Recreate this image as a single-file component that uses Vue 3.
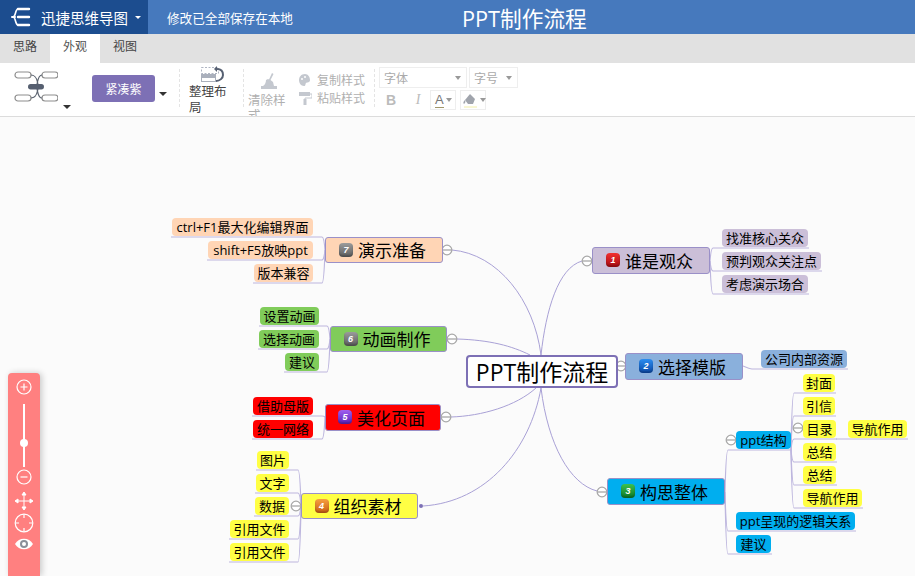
<template>
  <div class="app">
    <header class="topbar">
      <div class="brand">
        <svg class="logo" width="20" height="22" viewBox="0 0 20 22" fill="none" stroke="#fff" stroke-width="2" stroke-linecap="round">
          <path d="M7 3h11M7 11h11M7 19h11" stroke-width="2.4" />
          <path d="M7 3C4 3 5 11 2 11 5 11 4 19 7 19" stroke-width="1.6" />
          <path d="M1 11h3" />
        </svg>
        <span class="brand-name">迅捷思维导图</span>
        <i class="caret caret-white"></i>
      </div>
      <span class="save-msg">修改已全部保存在本地</span>
      <span class="doc-title">PPT制作流程</span>
    </header>

    <nav class="tabs">
      <span class="tab">思路</span>
      <span class="tab active">外观</span>
      <span class="tab">视图</span>
    </nav>

    <section class="toolbar">
      <div class="tool-theme">
        <svg width="44" height="32" viewBox="0 0 44 32" fill="none" stroke="#8d8d8d" stroke-width="1.2">
          <rect x="1" y="2" width="16" height="6" rx="3" />
          <rect x="28" y="2" width="16" height="6" rx="3" />
          <rect x="1" y="25" width="16" height="6" rx="3" />
          <rect x="28" y="25" width="16" height="6" rx="3" />
          <path d="M17 5c6 0 6 6 7 9M28 5c-4 0-4 6-5 9M17 28c6 0 6-6 7-9M28 28c-4 0-4-6-5-9" stroke="#5c6470" />
          <rect x="14" y="14" width="16" height="5.5" rx="2.7" fill="#565f70" stroke="none" />
        </svg>
        <i class="caret caret-struct"></i>
        <button class="skin-btn">紧凑紫</button>
        <i class="caret caret-skin"></i>
      </div>
      <span class="divider"></span>
      <div class="tool-tidy">
        <svg width="26" height="18" viewBox="0 0 26 18" fill="none">
          <rect x="1.5" y="1.5" width="17" height="6" stroke="#9aa2b2" stroke-width="0.8" stroke-dasharray="2 1.5" />
          <rect x="1" y="8" width="15" height="8" fill="#aab0bc" />
          <rect x="2" y="12" width="13" height="3" fill="#fff" />
          <path d="M17 3c5 0 6 3 6 6s-3 6-7 6" stroke="#566072" stroke-width="2" />
          <path d="M17 0l-3 3 3 3z" fill="#566072" />
        </svg>
        <span>整理布局</span>
      </div>
      <span class="divider"></span>
      <div class="tool-clear">
        <svg width="18" height="18" viewBox="0 0 18 18">
          <path d="M12 1l1.5 1-3 6 2.5 2 1 4H3c2-1 3-4 3-6l2-1 1 .5z" fill="#c4c8cf" />
          <rect x="1" y="14" width="16" height="3" fill="#c4c8cf" />
        </svg>
        <span>清除样式</span>
      </div>
      <div class="tool-format">
        <div class="format-row">
          <svg width="14" height="14" viewBox="0 0 14 14">
            <path d="M7 1C3 1 1 4 1 7s2 6 5 6c2 0 1-2 2-3s4 0 4-3-2-6-5-6z" fill="#c4c8cf" />
            <circle cx="4" cy="6" r="1" fill="#fff" />
            <circle cx="7" cy="4" r="1" fill="#fff" />
          </svg>
          <span>复制样式</span>
        </div>
        <div class="format-row">
          <svg width="14" height="14" viewBox="0 0 14 14">
            <rect x="1" y="1" width="11" height="4" fill="#c4c8cf" />
            <path d="M12 3h2v4H7v2" fill="none" stroke="#c4c8cf" />
            <rect x="5.5" y="8" width="3" height="6" fill="#c4c8cf" />
          </svg>
          <span>粘贴样式</span>
        </div>
      </div>
      <span class="divider"></span>
      <div class="tool-font">
        <div class="font-row">
          <span class="select select-font">字体<i class="caret caret-gray"></i></span>
          <span class="select select-size">字号<i class="caret caret-gray"></i></span>
        </div>
        <div class="font-row second">
          <b class="glyph-b">B</b>
          <em class="glyph-i">I</em>
          <span class="color-box"><span class="letter-a">A</span><i class="caret caret-gray"></i></span>
          <span class="color-box fill-box">
            <svg width="15" height="15" viewBox="0 0 15 15">
              <path d="M7 1l5 5-2 5H5L2 7z" fill="#a0a4ac" />
              <path d="M2 7c-2 2-2 3-1 4 1-1 2-2 1-4z" fill="#a0a4ac" />
              <path d="M1 14h13" stroke="#f2eea8" />
            </svg>
            <i class="caret caret-gray"></i>
          </span>
        </div>
      </div>
    </section>

    <main class="canvas">
      <svg class="links" width="915" height="459" viewBox="0 117 915 459" fill="none">
        <path v-for="(d, i) in curves" :key="'c' + i" :d="d" stroke="#a9a1d6" />
        <path v-for="(d, i) in branchPaths" :key="'b' + i" :d="d" stroke="#bdb6de" stroke-width="1.2" />
        <g v-for="(f, i) in folds" :key="'f' + i" stroke="#a8a8a8" stroke-width="1.3">
          <circle :cx="f[0]" :cy="f[1]" r="4.8" fill="#fff" />
          <path :d="`M${f[0] - 4} ${f[1]}h8`" />
        </g>
        <circle cx="421" cy="506" r="2" fill="#7d70b5" />
      </svg>

      <div class="node root" :style="boxStyle(root)">PPT制作流程</div>

      <div
        v-for="t in topics"
        :key="t.label"
        class="node topic"
        :style="[boxStyle(t), { background: t.color }]"
      >
        <span class="badge" :style="{ background: t.badge }">{{ t.num }}</span>
        <span>{{ t.label }}</span>
      </div>

      <template v-for="(b, bi) in branches" :key="bi">
        <div
          v-for="p in b.items"
          :key="p.label + p.y"
          class="node pill"
          :style="[boxStyle({ ...p, h: 18 }), { background: b.color }]"
        >{{ p.label }}</div>
      </template>

      <aside class="zoom-panel">
        <svg width="16" height="16" viewBox="0 0 16 16" fill="none" stroke="#fff" stroke-width="1.2">
          <circle cx="8" cy="8" r="7" />
          <path d="M4.5 8h7M8 4.5v7" />
        </svg>
        <div class="slider"><span class="knob"></span></div>
        <svg width="16" height="16" viewBox="0 0 16 16" fill="none" stroke="#fff" stroke-width="1.2">
          <circle cx="8" cy="8" r="7" />
          <path d="M4.5 8h7" />
        </svg>
        <svg class="gap-move" width="18" height="18" viewBox="0 0 18 18" fill="none" stroke="#fff" stroke-width="1">
          <path d="M9 1v16M1 9h16" />
          <path d="M9 0l-2 3h4zM9 18l-2-3h4zM0 9l3-2v4zM18 9l-3-2v4z" fill="#fff" />
        </svg>
        <svg width="20" height="20" viewBox="0 0 20 20" fill="none" stroke="#fff" stroke-width="1.2">
          <circle cx="10" cy="10" r="8.8" />
          <path d="M10 1.5v3.5M10 15v3.5M1.5 10h3.5M15 10h3.5" />
        </svg>
        <svg width="20" height="14" viewBox="0 0 20 14">
          <path d="M1 7c4-7 14-7 18 0-4 7-14 7-18 0z" fill="#fff" />
          <circle cx="10" cy="7" r="4" fill="#8a8f99" />
          <circle cx="10" cy="7" r="2" fill="#fff" />
        </svg>
      </aside>
    </main>
  </div>
</template>

<script setup>
// page coordinates, the canvas starts at y = 117
const CANVAS_TOP = 117

const root = { x: 466, y: 355, w: 152, h: 33 }

const topics = [
  { label: '谁是观众', num: 1, x: 592, y: 247, w: 118, h: 27, color: '#cbbfd8', badge: 'linear-gradient(#f23030, #a80c14)' },
  { label: '选择模版', num: 2, x: 625, y: 353, w: 118, h: 27, color: '#8ab0dc', badge: 'linear-gradient(#2b8df0, #0b4aa8)' },
  { label: '构思整体', num: 3, x: 607, y: 478, w: 118, h: 27, color: '#00aeef', badge: 'linear-gradient(#3cc04c, #0b7a2a)' },
  { label: '组织素材', num: 4, x: 301, y: 493, w: 117, h: 26, color: '#ffff44', badge: 'linear-gradient(#f6a040, #cc6014)' },
  { label: '美化页面', num: 5, x: 325, y: 404, w: 116, h: 27, color: '#ff0000', badge: 'linear-gradient(#a060f0, #5a20b8)' },
  { label: '动画制作', num: 6, x: 330, y: 326, w: 117, h: 26, color: '#80cc5a', badge: 'linear-gradient(#9a9a9a, #5c5c5c)' },
  { label: '演示准备', num: 7, x: 325, y: 237, w: 118, h: 26, color: '#ffd5b5', badge: 'linear-gradient(#9c9c9c, #5e5e5e)' }
]

const branches = [
  {
    hub: [325, 250], spine: 322, side: 'left', color: '#ffd5b5',
    items: [
      { label: 'ctrl+F1最大化编辑界面', x: 172, y: 218, w: 141 },
      { label: 'shift+F5放映ppt', x: 208, y: 241, w: 105 },
      { label: '版本兼容', x: 254, y: 264, w: 59 }
    ]
  },
  {
    hub: [330, 339], spine: 327, side: 'left', color: '#80cc5a',
    items: [
      { label: '设置动画', x: 260, y: 307, w: 59 },
      { label: '选择动画', x: 259, y: 330, w: 60 },
      { label: '建议', x: 285, y: 353, w: 34 }
    ]
  },
  {
    hub: [325, 417], spine: 322, side: 'left', color: '#ff0000',
    items: [
      { label: '借助母版', x: 253, y: 397, w: 60 },
      { label: '统一网络', x: 253, y: 420, w: 60 }
    ]
  },
  {
    hub: [301, 506], spine: 298, side: 'left', color: '#ffff44',
    items: [
      { label: '图片', x: 257, y: 451, w: 32 },
      { label: '文字', x: 256, y: 474, w: 33 },
      { label: '数据', x: 255, y: 497, w: 34 },
      { label: '引用文件', x: 230, y: 520, w: 59 },
      { label: '引用文件', x: 230, y: 543, w: 59 }
    ]
  },
  {
    hub: [710, 261], spine: 713, side: 'right', color: '#cbbfd8',
    items: [
      { label: '找准核心关众', x: 722, y: 229, w: 86 },
      { label: '预判观众关注点', x: 722, y: 252, w: 99 },
      { label: '考虑演示场合', x: 722, y: 275, w: 86 }
    ]
  },
  {
    hub: [743, 366], spine: 752, side: 'right', color: '#8ab0dc',
    items: [{ label: '公司内部资源', x: 761, y: 350, w: 86 }]
  },
  {
    hub: [725, 492], spine: 728, side: 'right', color: '#00aeef',
    items: [
      { label: 'ppt结构', x: 736, y: 431, w: 55 },
      { label: 'ppt呈现的逻辑关系', x: 736, y: 512, w: 119 },
      { label: '建议', x: 736, y: 535, w: 35 }
    ]
  },
  {
    hub: [791, 450], spine: 794, side: 'right', color: '#ffff44',
    items: [
      { label: '封面', x: 803, y: 374, w: 32 },
      { label: '引信', x: 803, y: 397, w: 32 },
      { label: '目录', x: 803, y: 420, w: 33 },
      { label: '总结', x: 803, y: 443, w: 33 },
      { label: '总结', x: 803, y: 466, w: 33 },
      { label: '导航作用', x: 803, y: 489, w: 59 }
    ]
  },
  {
    hub: [836, 439], spine: 838, side: 'right', color: '#ffff44',
    items: [{ label: '导航作用', x: 848, y: 420, w: 59 }]
  }
]

const curves = [
  'M452 250C498 254 534 300 541 355',
  'M582 261C558 268 546 310 541 355',
  'M457 339C490 340 512 346 530 355',
  'M451 417C482 416 516 406 536 388',
  'M423 506C486 502 530 450 541 388',
  'M597 491C570 484 548 445 541 388',
  'M618 366H625'
]

const folds = [
  [447, 250], [452, 339], [446, 417], [296, 506],
  [587, 261], [621, 366], [602, 492], [731, 440], [798, 428]
]

// every leaf sits on an underline that bends back to its parent
const branchPaths = branches.flatMap(({ hub, spine, side, items }) =>
  items.map(p => {
    const uy = p.y + 19
    if (side === 'left') {
      return `M${p.x - 1} ${uy}H${spine}Q${spine + 2} ${uy} ${hub[0]} ${hub[1]}`
    }
    return `M${p.x + p.w + 1} ${uy}H${spine}Q${spine - 2} ${uy} ${hub[0]} ${hub[1]}`
  })
)

const boxStyle = n => ({
  left: n.x + 'px',
  top: n.y - CANVAS_TOP + 'px',
  width: n.w + 'px',
  height: n.h + 'px'
})
</script>

<style>
html,
body {
  margin: 0;
  overflow: hidden;
}
</style>

<style scoped>
.app {
  display: flex;
  flex-direction: column;
  height: 576px;
  overflow: hidden;
  font-family: "Open Sans", "Noto Sans CJK SC", sans-serif;
  color: #222;
}

.topbar {
  display: flex;
  align-items: center;
  flex: 0 0 34px;
  background: #4679bd;
  color: #fff;
}

.brand {
  display: flex;
  align-items: center;
  width: 148px;
  height: 100%;
  padding-left: 11px;
  box-sizing: border-box;
  background: #1c4d8f;
}

.logo {
  margin-right: 10px;
}

.brand-name {
  font-size: 14.5px;
  white-space: nowrap;
}

.save-msg {
  width: 126px;
  margin-left: 19px;
  font-size: 12.6px;
  white-space: nowrap;
}

.doc-title {
  margin-left: 169px;
  font-size: 21.7px;
  white-space: nowrap;
}

.caret {
  display: inline-block;
  width: 0;
  height: 0;
  border-left: 4px solid transparent;
  border-right: 4px solid transparent;
  border-top: 4px solid #333;
}

.caret-white {
  margin-left: 7px;
  border-top-color: #fff;
  border-left-width: 3px;
  border-right-width: 3px;
  border-top-width: 3px;
}

.tabs {
  display: flex;
  flex: 0 0 29px;
  background: #e1e1e1;
  font-size: 12px;
  line-height: 24px;
}

.tab {
  width: 50px;
  padding-top: 1px;
  text-align: center;
  color: #444;
}

.active {
  background: #fff;
  color: #555;
}

.toolbar {
  display: flex;
  flex: 0 0 54px;
  background: #fff;
  border-bottom: 1px solid #dcdcdc;
  overflow: hidden;
  box-sizing: border-box;
}

.toolbar svg {
  flex: none;
}

.divider {
  flex: none;
  height: 38px;
  margin-top: 6px;
  border-left: 1px dashed #e4e4e4;
}

.tool-theme {
  display: flex;
  align-items: flex-start;
  width: 179px;
  padding: 7px 0 0 14px;
  box-sizing: border-box;
  flex: none;
}

.caret-struct {
  margin: 35px 0 0 5px;
}

.skin-btn {
  width: 63px;
  height: 27px;
  margin: 5px 0 0 21px;
  padding: 0;
  border: 0;
  border-radius: 3px;
  background: #7d70b5;
  color: #fff;
  font: 12px "Noto Sans CJK SC", sans-serif;
}

.caret-skin {
  margin: 22px 0 0 4px;
}

.tool-tidy {
  display: flex;
  flex-direction: column;
  width: 63px;
  padding: 3px 14px 0 9px;
  box-sizing: border-box;
  flex: none;
  color: #444;
  font-size: 12.5px;
  line-height: 16px;
}

.tool-tidy svg {
  margin-left: 11px;
}

.tool-clear {
  display: flex;
  flex-direction: column;
  align-items: center;
  gap: 3px;
  width: 42px;
  padding: 9px 0 0 4px;
  flex: none;
  color: #b0b0b0;
  font-size: 12.5px;
  line-height: 15px;
  text-align: left;
}

.tool-format {
  display: flex;
  flex-direction: column;
  gap: 4px;
  width: 84px;
  padding: 10px 0 0 8px;
  box-sizing: border-box;
  flex: none;
  color: #b0b0b0;
  font-size: 12px;
}

.format-row {
  display: flex;
  align-items: center;
  gap: 5px;
  height: 14px;
  white-space: nowrap;
}

.tool-font {
  padding: 4px 0 0 4px;
}

.font-row {
  display: flex;
  gap: 2px;
}

.second {
  align-items: center;
  margin-top: 2px;
}

.select {
  display: flex;
  align-items: center;
  justify-content: space-between;
  height: 21px;
  padding: 0 5px 0 4px;
  box-sizing: border-box;
  border: 1px solid #eee;
  color: #aaa;
  font-size: 12px;
}

.select-font {
  width: 88px;
}

.select-size {
  width: 49px;
}

.caret-gray {
  border-top-color: #999;
  border-left-width: 3.5px;
  border-right-width: 3.5px;
}

.glyph-b {
  width: 18px;
  margin-left: 3px;
  text-align: center;
  color: #bbb;
  font: bold 14px "Liberation Sans", sans-serif;
}

.glyph-i {
  width: 18px;
  margin-left: 7px;
  text-align: center;
  color: #bbb;
  font: italic 14px "Liberation Serif", serif;
}

.color-box {
  display: flex;
  align-items: center;
  gap: 2px;
  width: 26px;
  height: 20px;
  margin-left: 1px;
  padding-left: 4px;
  box-sizing: border-box;
  border: 1px solid #eee;
}

.fill-box {
  margin-left: 2px;
  padding-left: 2px;
}

.letter-a {
  color: #777;
  font: 13px/14px "Liberation Sans", sans-serif;
  border-bottom: 1px solid #a0966a;
}

.canvas {
  position: relative;
  flex: 1;
  background: #fbfbfb;
  overflow: hidden;
}

.links {
  position: absolute;
  left: 0;
  top: 0;
}

.node {
  position: absolute;
  display: flex;
  align-items: center;
  justify-content: center;
  box-sizing: border-box;
  padding-bottom: 1px;
  color: #000;
  white-space: nowrap;
}

.root {
  border: 2px solid #7d70b5;
  border-radius: 4px;
  background: #fff;
  font-size: 23px;
}

.topic {
  gap: 5px;
  padding-right: 3px;
  border: 1px solid #9a90c8;
  border-radius: 3px;
  font-size: 17px;
}

.badge {
  display: flex;
  align-items: center;
  justify-content: center;
  width: 14px;
  height: 14px;
  border-radius: 4px;
  box-shadow: inset 0 -2px 2px rgba(0, 0, 0, 0.2);
  color: #fff;
  font: italic bold 9px "Liberation Sans", sans-serif;
}

.pill {
  border-radius: 4px;
  font-size: 13px;
}

.zoom-panel {
  position: absolute;
  left: 8px;
  bottom: 0;
  display: flex;
  flex-direction: column;
  align-items: center;
  width: 32px;
  height: 203px;
  padding-top: 6px;
  box-sizing: border-box;
  border-radius: 4px 4px 0 0;
  background: #ff8080;
  box-shadow: 2px 0 6px rgba(0, 0, 0, 0.2);
}

.zoom-panel svg {
  flex: none;
}

.slider {
  position: relative;
  width: 2px;
  height: 63px;
  margin: 9px 0 2px;
  background: #fff;
}

.knob {
  position: absolute;
  left: -3px;
  top: 35px;
  width: 8px;
  height: 8px;
  border-radius: 50%;
  background: #fff;
}

.gap-move {
  margin: 7px 0 3px;
}

.zoom-panel svg:last-child {
  margin-top: 4px;
}
</style>
